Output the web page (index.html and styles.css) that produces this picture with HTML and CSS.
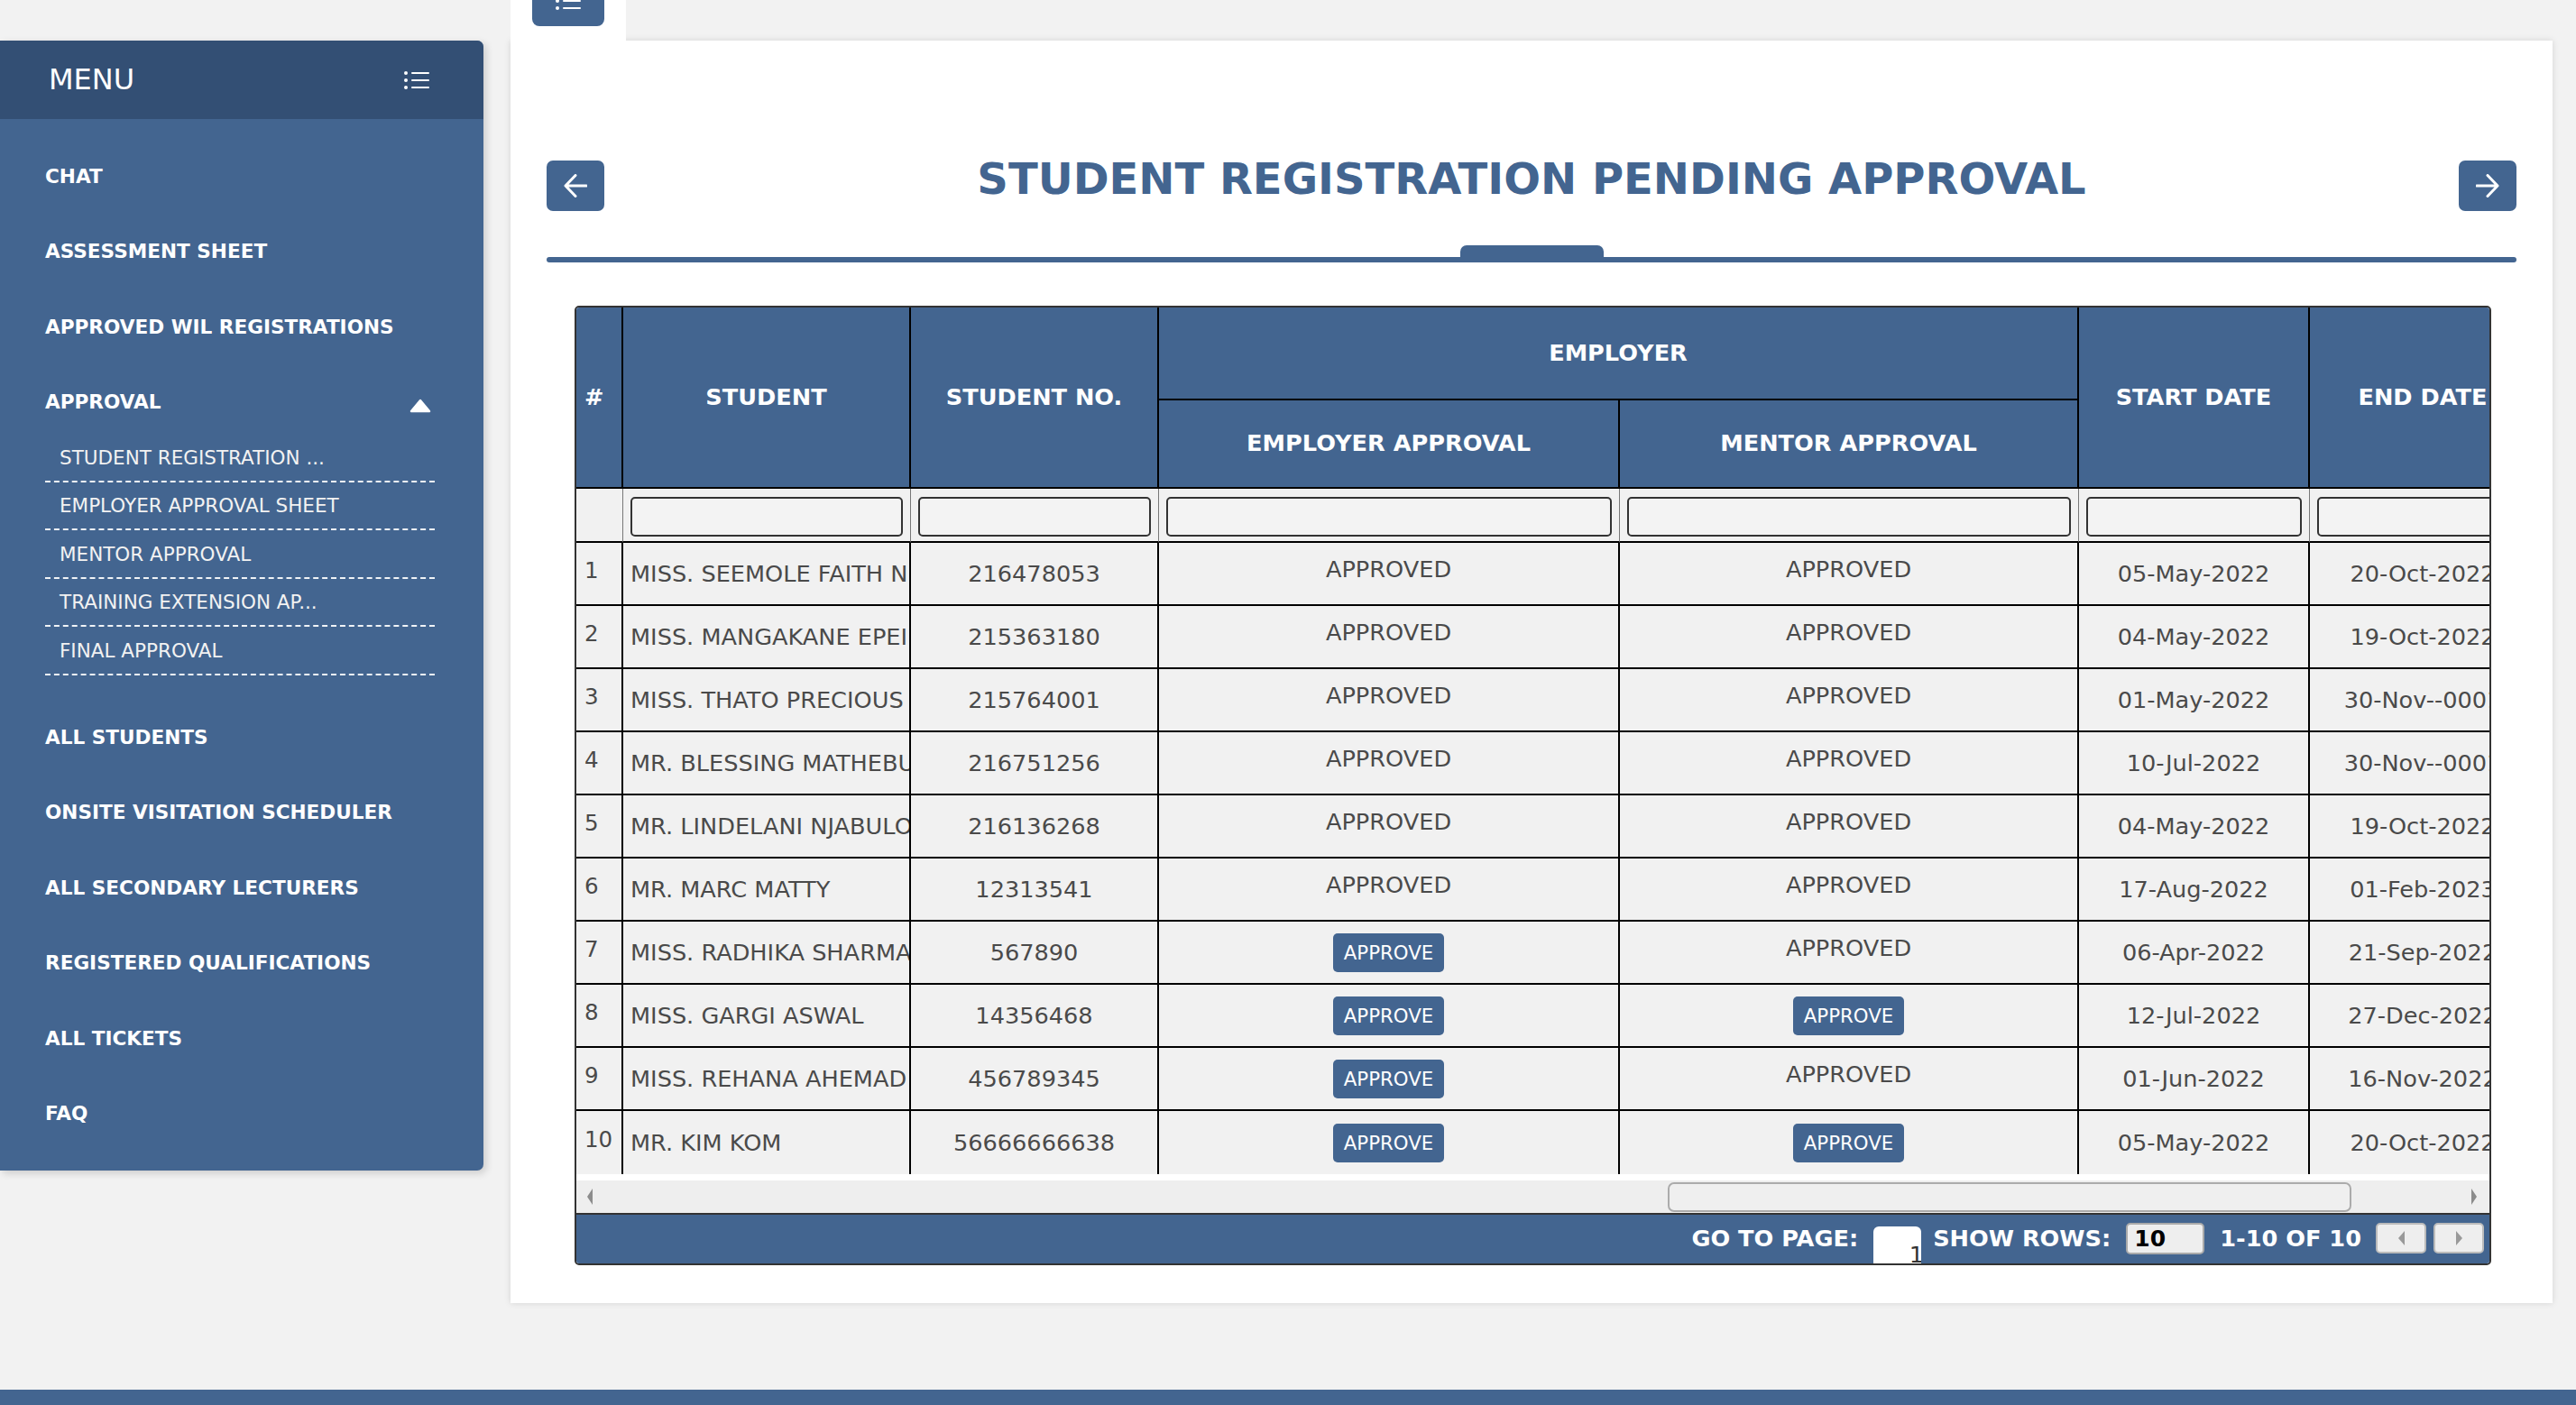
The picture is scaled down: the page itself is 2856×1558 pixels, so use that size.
FILE: index.html
```html
<!DOCTYPE html>
<html lang="en">
<head>
<meta charset="utf-8">
<title>Student Registration Pending Approval</title>
<link rel="stylesheet" href="styles.css">
</head>
<body>
<div class="layout">
  <aside class="sidebar">
    <div class="side-head">
      <span class="side-title">MENU</span>
      <svg class="list-icon" width="28" height="20" viewBox="0 0 28 20"><g fill="#fff"><circle cx="2" cy="2" r="2"/><circle cx="2" cy="10" r="2"/><circle cx="2" cy="18" r="2"/><rect x="8" y="1" width="20" height="2" rx="1"/><rect x="8" y="9" width="20" height="2" rx="1"/><rect x="8" y="17" width="20" height="2" rx="1"/></g></svg>
    </div>
    <nav class="side-nav">
      <div class="nav-item">CHAT</div>
      <div class="nav-item">ASSESSMENT SHEET</div>
      <div class="nav-item">APPROVED WIL REGISTRATIONS</div>
      <div class="nav-item nav-open">APPROVAL
        <svg class="caret" width="24" height="16" viewBox="0 0 24 16"><polygon points="12,2 22,14 2,14" fill="#fff" stroke="#fff" stroke-width="2.5" stroke-linejoin="round"/></svg>
      </div>
      <div class="submenu">
        <div class="sub-item">STUDENT REGISTRATION ...</div>
        <div class="sub-item">EMPLOYER APPROVAL SHEET</div>
        <div class="sub-item">MENTOR APPROVAL</div>
        <div class="sub-item">TRAINING EXTENSION AP...</div>
        <div class="sub-item">FINAL APPROVAL</div>
      </div>
      <div class="nav-item">ALL STUDENTS</div>
      <div class="nav-item">ONSITE VISITATION SCHEDULER</div>
      <div class="nav-item">ALL SECONDARY LECTURERS</div>
      <div class="nav-item">REGISTERED QUALIFICATIONS</div>
      <div class="nav-item">ALL TICKETS</div>
      <div class="nav-item">FAQ</div>
    </nav>
  </aside>

  <main class="main">
    <div class="tab">
      <div class="toggle">
        <svg width="28" height="20" viewBox="0 0 28 20"><g fill="#fff"><circle cx="2" cy="2" r="2"/><circle cx="2" cy="10" r="2"/><circle cx="2" cy="18" r="2"/><rect x="8" y="1" width="20" height="2" rx="1"/><rect x="8" y="9" width="20" height="2" rx="1"/><rect x="8" y="17" width="20" height="2" rx="1"/></g></svg>
      </div>
    </div>
    <section class="card">
      <div class="card-head">
        <div class="nav-btn">
          <svg width="26" height="26" viewBox="0 0 26 26"><path d="M13 1.5 L2 13 L13 24.5 M2.5 13 H25" fill="none" stroke="#fff" stroke-width="3" stroke-linecap="round" stroke-linejoin="round"/></svg>
        </div>
        <h1 class="title">STUDENT REGISTRATION PENDING APPROVAL</h1>
        <div class="nav-btn">
          <svg width="26" height="26" viewBox="0 0 26 26"><path d="M13 1.5 L24 13 L13 24.5 M23.5 13 H1" fill="none" stroke="#fff" stroke-width="3" stroke-linecap="round" stroke-linejoin="round"/></svg>
        </div>
      </div>
      <div class="divider">
        <div class="divider-tab"></div>
        <div class="divider-line"></div>
      </div>

      <div class="grid">
        <div class="grid-view">
          <table class="data">
            <colgroup>
              <col class="c-num"><col class="c-student"><col class="c-no"><col class="c-emp"><col class="c-ment"><col class="c-start"><col class="c-end">
            </colgroup>
            <thead>
              <tr class="h1">
                <th rowspan="2" class="th-num">#</th>
                <th rowspan="2">STUDENT</th>
                <th rowspan="2">STUDENT NO.</th>
                <th colspan="2">EMPLOYER</th>
                <th rowspan="2">START DATE</th>
                <th rowspan="2" class="last">END DATE</th>
              </tr>
              <tr class="h2">
                <th>EMPLOYER APPROVAL</th>
                <th>MENTOR APPROVAL</th>
              </tr>
              <tr class="filters">
                <td></td>
                <td><div class="filter"></div></td>
                <td><div class="filter"></div></td>
                <td><div class="filter"></div></td>
                <td><div class="filter"></div></td>
                <td><div class="filter"></div></td>
                <td class="last"><div class="filter"></div></td>
              </tr>
            </thead>
            <tbody>
              <tr><td class="num">1</td><td class="name">MISS. SEEMOLE FAITH N</td><td>216478053</td><td class="approved">APPROVED</td><td class="approved">APPROVED</td><td>05-May-2022</td><td class="last">20-Oct-2022</td></tr>
              <tr><td class="num">2</td><td class="name">MISS. MANGAKANE EPEI</td><td>215363180</td><td class="approved">APPROVED</td><td class="approved">APPROVED</td><td>04-May-2022</td><td class="last">19-Oct-2022</td></tr>
              <tr><td class="num">3</td><td class="name">MISS. THATO PRECIOUS</td><td>215764001</td><td class="approved">APPROVED</td><td class="approved">APPROVED</td><td>01-May-2022</td><td class="last">30-Nov--0001</td></tr>
              <tr><td class="num">4</td><td class="name">MR. BLESSING MATHEBU</td><td>216751256</td><td class="approved">APPROVED</td><td class="approved">APPROVED</td><td>10-Jul-2022</td><td class="last">30-Nov--0001</td></tr>
              <tr><td class="num">5</td><td class="name">MR. LINDELANI NJABULO</td><td>216136268</td><td class="approved">APPROVED</td><td class="approved">APPROVED</td><td>04-May-2022</td><td class="last">19-Oct-2022</td></tr>
              <tr><td class="num">6</td><td class="name">MR. MARC MATTY</td><td>12313541</td><td class="approved">APPROVED</td><td class="approved">APPROVED</td><td>17-Aug-2022</td><td class="last">01-Feb-2023</td></tr>
              <tr><td class="num">7</td><td class="name">MISS. RADHIKA SHARMA</td><td>567890</td><td><span class="approve-btn">APPROVE</span></td><td class="approved">APPROVED</td><td>06-Apr-2022</td><td class="last">21-Sep-2022</td></tr>
              <tr><td class="num">8</td><td class="name">MISS. GARGI ASWAL</td><td>14356468</td><td><span class="approve-btn">APPROVE</span></td><td><span class="approve-btn">APPROVE</span></td><td>12-Jul-2022</td><td class="last">27-Dec-2022</td></tr>
              <tr><td class="num">9</td><td class="name">MISS. REHANA AHEMAD</td><td>456789345</td><td><span class="approve-btn">APPROVE</span></td><td class="approved">APPROVED</td><td>01-Jun-2022</td><td class="last">16-Nov-2022</td></tr>
              <tr><td class="num">10</td><td class="name">MR. KIM KOM</td><td>56666666638</td><td><span class="approve-btn">APPROVE</span></td><td><span class="approve-btn">APPROVE</span></td><td>05-May-2022</td><td class="last">20-Oct-2022</td></tr>
            </tbody>
          </table>
        </div>
        <div class="hscroll">
          <div class="track">
            <span class="arr-left"></span>
            <span class="thumb"></span>
            <span class="arr-right"></span>
          </div>
        </div>
        <div class="pager">
          <span class="pg-label gap17">GO TO PAGE:</span>
          <span class="page-box"><span class="page-num">1</span></span>
          <span class="pg-label gap17">SHOW ROWS:</span>
          <span class="rows-box">10</span>
          <span class="pg-label gap16">1-10 OF 10</span>
          <span class="pg-btn gap8"><span class="tri-left"></span></span>
          <span class="pg-btn"><span class="tri-right"></span></span>
        </div>
      </div>
    </section>
  </main>
</div>
<footer class="bottom-bar"></footer>
</body>
</html>
```

FILE: styles.css
```css
html, body {
  margin: 0;
  padding: 0;
}

body {
  background: #f2f2f2;
  font-family: "DejaVu Sans", "Liberation Sans", sans-serif;
  overflow: hidden;
}

.layout {
  display: flex;
  align-items: flex-start;
}

/* ---------- Sidebar ---------- */
.sidebar {
  width: 536px;
  margin-top: 45px;
  background: #436590;
  border-radius: 0 7px 7px 0;
  box-shadow: 3px 3px 8px rgba(0, 0, 0, 0.16);
  overflow: hidden;
  color: #fff;
}

.side-head {
  height: 87px;
  background: #334f74;
  display: flex;
  align-items: center;
  justify-content: space-between;
  padding: 0 60px 0 54px;
}

.side-title {
  font-size: 32px;
  line-height: 1;
  margin-top: -2px;
}

.side-nav {
  padding: 21.25px 0 21.75px;
}

.nav-item {
  height: 83.5px;
  display: flex;
  align-items: center;
  justify-content: space-between;
  padding: 0 59px 0 50px;
  font-size: 21.6px;
  font-weight: bold;
  line-height: 25px;
  box-sizing: border-box;
}

.nav-open {
  height: 77.5px;
  align-items: flex-start;
  padding-top: 29px;
}

.caret {
  margin-top: 9px;
  margin-right: -1px;
}

.submenu {
  margin: 0 54px 26.5px 50px;
}

.sub-item {
  height: 53.5px;
  box-sizing: border-box;
  border-bottom: 2px dashed rgba(255, 255, 255, 0.92);
  padding-left: 16px;
  display: flex;
  align-items: center;
  font-size: 21.5px;
  color: #f2f2f2;
}

/* ---------- Main ---------- */
.main {
  margin-left: 30px;
  width: 2264px;
}

.tab {
  position: relative;
  z-index: 1;
  display: flex;
  width: 128px;
  height: 45px;
  background: #fff;
}

.toggle {
  margin: -27px 0 0 24px;
  width: 80px;
  height: 56px;
  background: #436590;
  border-radius: 8px;
  display: flex;
  align-items: center;
  justify-content: center;
}

.card {
  height: 1400px;
  box-sizing: border-box;
  background: #fff;
  box-shadow: 0 0 7px rgba(0, 0, 0, 0.13);
  padding: 133px 40px 0;
}

.card-head {
  display: flex;
  align-items: flex-start;
  justify-content: space-between;
  height: 56px;
}

.nav-btn {
  width: 64px;
  height: 56px;
  background: #436590;
  border-radius: 7px;
  display: flex;
  align-items: center;
  justify-content: center;
}

.title {
  margin: -8px 0 0;
  font-size: 48px;
  line-height: 56px;
  font-weight: bold;
  color: #436590;
}

.divider {
  margin-top: 38px;
}

.divider-tab {
  width: 159px;
  height: 13px;
  margin: 0 auto;
  background: #436590;
  border-radius: 7px 7px 0 0;
}

.divider-line {
  height: 6px;
  background: #436590;
  border-radius: 3px;
}

/* ---------- Grid ---------- */
.grid {
  margin: 48px 0 0 31px;
  width: 2125px;
  box-sizing: border-box;
  border: 2px solid #333;
  border-radius: 5px;
  overflow: hidden;
  background: #fff;
}

.grid-view {
  height: 962px;
  overflow: hidden;
}

.data {
  width: 2172px;
  table-layout: fixed;
  border-collapse: separate;
  border-spacing: 0;
  font-size: 25.6px;
  color: #4a4a4a;
}

.c-num { width: 52px; }
.c-student { width: 319px; }
.c-no { width: 275px; }
.c-emp { width: 511px; }
.c-ment { width: 509px; }
.c-start { width: 256px; }
.c-end { width: 250px; }

.data th {
  background: #436590;
  color: #fff;
  font-weight: bold;
  text-align: center;
  vertical-align: middle;
  border-right: 2px solid #000;
  border-bottom: 2px solid #000;
  padding: 0 0 2px;
  white-space: nowrap;
}

.data th.th-num {
  text-align: left;
  padding-left: 9px;
}

.data .last {
  border-right: none;
}

.h1 { height: 103px; }
.h2 { height: 98px; }

.filters { height: 60px; }

.filters td {
  background: #f1f1f1;
  border-right: 1px solid #777;
  border-bottom: 2px solid #000;
  padding: 9px 8px 5px 8px;
}

.filter {
  height: 44px;
  box-sizing: border-box;
  border: 2px solid #333;
  border-radius: 5px;
  background: #f3f3f3;
}

.data tbody tr {
  height: 70px;
}

.data tbody td {
  background: #f1f1f1;
  border-right: 2px solid #000;
  border-bottom: 2px solid #000;
  text-align: center;
  vertical-align: middle;
  padding: 0;
  white-space: nowrap;
  overflow: hidden;
}

.data tbody tr:last-child td {
  border-bottom: none;
}

.data tbody td.num {
  text-align: left;
  padding: 0 0 7px 9px;
  font-size: 24.5px;
}

.data tbody td.name {
  text-align: left;
  padding-left: 8px;
}

.data tbody td.approved {
  padding-bottom: 10px;
}

.approve-btn {
  display: inline-block;
  height: 43px;
  line-height: 43px;
  padding: 0 12px;
  background: #436590;
  color: #fff;
  border-radius: 5px;
  font-size: 21.3px;
  vertical-align: middle;
}

/* ---------- Scrollbar ---------- */
.hscroll {
  height: 42px;
  box-sizing: border-box;
  padding-top: 6px;
  background: #fff;
}

.track {
  height: 36px;
  background: #eeeeee;
  display: flex;
  align-items: center;
}

.arr-left {
  margin-left: 12px;
  width: 0;
  height: 0;
  border-top: 9px solid transparent;
  border-bottom: 9px solid transparent;
  border-right: 6px solid #8c8c8c;
}

.thumb {
  margin-left: 1192px;
  width: 758px;
  height: 33px;
  box-sizing: border-box;
  border: 2px solid #ababab;
  border-radius: 7px;
  background: #efefef;
}

.arr-right {
  margin-left: 133px;
  width: 0;
  height: 0;
  border-top: 9px solid transparent;
  border-bottom: 9px solid transparent;
  border-left: 6px solid #8c8c8c;
}

/* ---------- Pager ---------- */
.pager {
  height: 56px;
  box-sizing: border-box;
  border-top: 2px solid #333;
  background: #436590;
  display: flex;
  align-items: center;
  justify-content: flex-end;
  padding: 0 6px 2px 0;
}

.pg-label {
  color: #fff;
  font-weight: bold;
  font-size: 25.6px;
  white-space: nowrap;
}

.gap17 { margin-right: 17px; }
.gap16 { margin-right: 16px; }
.gap8 { margin-right: 8px; }

.page-box {
  align-self: flex-end;
  width: 53px;
  height: 41px;
  margin: 0 13px -2px 0;
  background: #fff;
  border-radius: 6px 6px 0 0;
  overflow: hidden;
  display: flex;
  justify-content: flex-end;
  align-items: flex-end;
}

.page-num {
  font-size: 25.6px;
  line-height: 25px;
  color: #333;
  margin: 0 -3px -3px 0;
}

.rows-box {
  width: 87px;
  height: 35px;
  box-sizing: border-box;
  margin-right: 17px;
  background: #eeeeee;
  border: 2px solid #aaa;
  border-radius: 5px;
  padding-left: 7px;
  font-size: 25px;
  font-weight: bold;
  color: #000;
  line-height: 31px;
}

.pg-btn {
  width: 56px;
  height: 34px;
  box-sizing: border-box;
  background: #eeeeee;
  border: 2px solid #bbb;
  border-radius: 5px;
  display: flex;
  align-items: center;
  justify-content: center;
}

.tri-left {
  width: 0;
  height: 0;
  border-top: 8px solid transparent;
  border-bottom: 8px solid transparent;
  border-right: 7px solid #999;
}

.tri-right {
  width: 0;
  height: 0;
  border-top: 8px solid transparent;
  border-bottom: 8px solid transparent;
  border-left: 7px solid #999;
}

/* ---------- Bottom bar ---------- */
.bottom-bar {
  height: 17px;
  margin-top: 96px;
  background: #436590;
}
```
